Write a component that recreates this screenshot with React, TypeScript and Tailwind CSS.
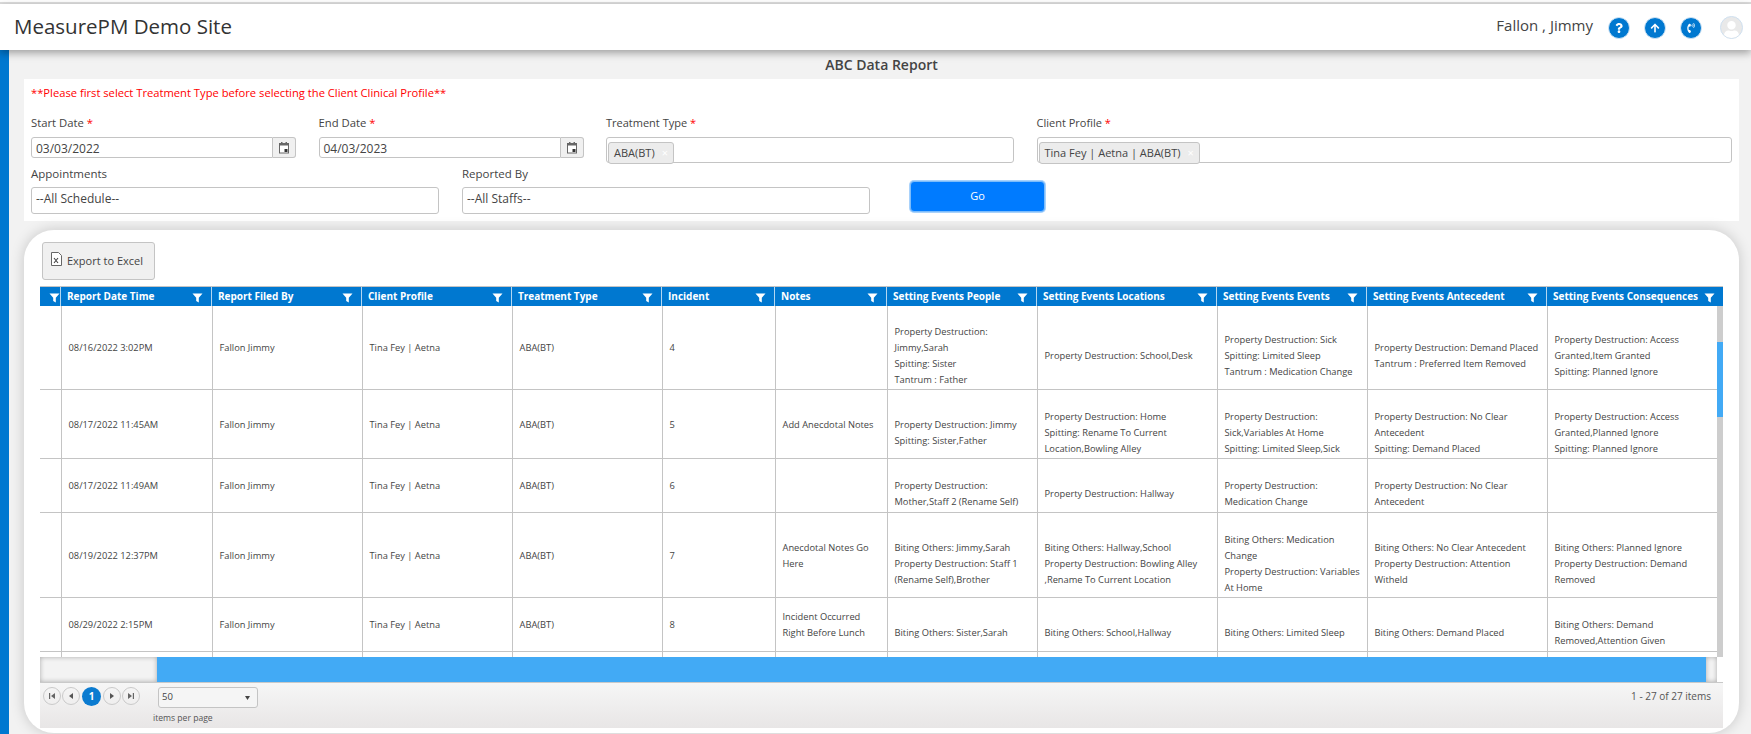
import { FaQuestion, FaArrowUp, FaPhoneVolume, FaUser } from 'react-icons/fa';

const columns = [
  { label: '', width: 21 },
  { label: 'Report Date Time', width: 151 },
  { label: 'Report Filed By', width: 150 },
  { label: 'Client Profile', width: 150 },
  { label: 'Treatment Type', width: 150 },
  { label: 'Incident', width: 113 },
  { label: 'Notes', width: 112 },
  { label: 'Setting Events People', width: 150 },
  { label: 'Setting Events Locations', width: 180 },
  { label: 'Setting Events Events', width: 150 },
  { label: 'Setting Events Antecedent', width: 180 },
  { label: 'Setting Events Consequences', width: 170 },
];

const rows = [
  {
    height: 83,
    cells: [
      ['08/16/2022 3:02PM'], ['Fallon Jimmy'], ['Tina Fey | Aetna'], ['ABA(BT)'], ['4'], [],
      ['Property Destruction:', 'Jimmy,Sarah', 'Spitting: Sister', 'Tantrum : Father'],
      ['Property Destruction: School,Desk'],
      ['Property Destruction: Sick', 'Spitting: Limited Sleep', 'Tantrum : Medication Change'],
      ['Property Destruction: Demand Placed', 'Tantrum : Preferred Item Removed'],
      ['Property Destruction: Access', 'Granted,Item Granted', 'Spitting: Planned Ignore'],
    ],
  },
  {
    height: 69,
    cells: [
      ['08/17/2022 11:45AM'], ['Fallon Jimmy'], ['Tina Fey | Aetna'], ['ABA(BT)'], ['5'], ['Add Anecdotal Notes'],
      ['Property Destruction: Jimmy', 'Spitting: Sister,Father'],
      ['Property Destruction: Home', 'Spitting: Rename To Current', 'Location,Bowling Alley'],
      ['Property Destruction:', 'Sick,Variables At Home', 'Spitting: Limited Sleep,Sick'],
      ['Property Destruction: No Clear', 'Antecedent', 'Spitting: Demand Placed'],
      ['Property Destruction: Access', 'Granted,Planned Ignore', 'Spitting: Planned Ignore'],
    ],
  },
  {
    height: 54,
    cells: [
      ['08/17/2022 11:49AM'], ['Fallon Jimmy'], ['Tina Fey | Aetna'], ['ABA(BT)'], ['6'], [],
      ['Property Destruction:', 'Mother,Staff 2 (Rename Self)'],
      ['Property Destruction: Hallway'],
      ['Property Destruction:', 'Medication Change'],
      ['Property Destruction: No Clear', 'Antecedent'],
      [],
    ],
  },
  {
    height: 85,
    cells: [
      ['08/19/2022 12:37PM'], ['Fallon Jimmy'], ['Tina Fey | Aetna'], ['ABA(BT)'], ['7'], ['Anecdotal Notes Go', 'Here'],
      ['Biting Others: Jimmy,Sarah', 'Property Destruction: Staff 1', '(Rename Self),Brother'],
      ['Biting Others: Hallway,School', 'Property Destruction: Bowling Alley', ',Rename To Current Location'],
      ['Biting Others: Medication', 'Change', 'Property Destruction: Variables', 'At Home'],
      ['Biting Others: No Clear Antecedent', 'Property Destruction: Attention', 'Witheld'],
      ['Biting Others: Planned Ignore', 'Property Destruction: Demand', 'Removed'],
    ],
  },
  {
    height: 54,
    cells: [
      ['08/29/2022 2:15PM'], ['Fallon Jimmy'], ['Tina Fey | Aetna'], ['ABA(BT)'], ['8'], ['Incident Occurred', 'Right Before Lunch'],
      ['Biting Others: Sister,Sarah'],
      ['Biting Others: School,Hallway'],
      ['Biting Others: Limited Sleep'],
      ['Biting Others: Demand Placed'],
      ['Biting Others: Demand', 'Removed,Attention Given'],
    ],
  },
  // only the top of this row shows above the scrollbar
  { height: 40, cells: [[], [], [], [], [], [], [], [], [], [], []] },
];

const FilterIcon = () => (
  <svg width="11" height="11" viewBox="0 0 11 11" className="shrink-0 mt-[2px]">
    <path d="M0.5 1.5h10L6.8 5.8V10.5L4.2 9V5.8z" fill="#fff" />
  </svg>
);

const CalendarIcon = () => (
  <svg width="12" height="13" viewBox="0 0 12 13">
    <rect x="1.5" y="2.5" width="9" height="9.5" fill="#fff" stroke="#666" strokeWidth="1" />
    <rect x="1.5" y="2.5" width="9" height="2" fill="#666" />
    <rect x="3" y="1" width="1.5" height="2" fill="#666" />
    <rect x="7.5" y="1" width="1.5" height="2" fill="#666" />
    <rect x="6.5" y="8" width="3" height="3" fill="#333" />
  </svg>
);

const ExcelIcon = () => (
  <svg width="11" height="14" viewBox="0 0 11 14">
    <path d="M0.5 0.5h7l3 3v10h-10z" fill="#fff" stroke="#666" />
    <path d="M3 6l4 5M7 6l-4 5" stroke="#444" strokeWidth="1.1" />
  </svg>
);

const Required = () => <span className="text-[#f00]"> *</span>;

const DateField = ({ label, value }: { label: string; value: string }) => (
  <div className="w-[265px] shrink-0">
    <div className="h-[27px] pt-[5px] text-[11.3px] leading-[16px] text-[#444]">
      {label}
      <Required />
    </div>
    <div className="flex h-[21px]">
      <div className="flex-1 border border-[#c4c4c4] rounded-l-[3px] px-[4px] text-[12px] leading-[21px] text-[#444]">
        {value}
      </div>
      <div className="w-[23px] flex items-center justify-center border border-l-0 border-[#c4c4c4] rounded-r-[3px] bg-[#f0f0f0]">
        <CalendarIcon />
      </div>
    </div>
  </div>
);

const TagField = ({ label, tag, className }: { label: string; tag: string; className: string }) => (
  <div className={className}>
    <div className="h-[27px] pt-[5px] text-[11px] leading-[16px] text-[#444]">
      {label}
      <Required />
    </div>
    <div className="h-[26px] border border-[#c4c4c4] rounded-[3px] p-[1px]">
      <span className="inline-flex items-center h-[22px] px-[5px] gap-[7px] bg-[#ececec] border border-[#c4c4c4] rounded-[3px] text-[11px] text-[#444]">
        {tag}
        <span className="text-white text-[11px]">×</span>
      </span>
    </div>
  </div>
);

const SelectField = ({ label, value }: { label: string; value: string }) => (
  <div className="w-[408px] shrink-0">
    <div className="h-[22px] pt-[1px] text-[11.5px] leading-[16px] text-[#444]">{label}</div>
    <div className="h-[27px] border border-[#c4c4c4] rounded-[3px] px-[4px] pt-[3px] text-[12px] leading-[16px] text-[#444]">
      {value}
    </div>
  </div>
);

const PagerButton = ({ kind }: { kind: 'first' | 'prev' | 'next' | 'last' }) => (
  <div className="w-[18px] h-[18px] rounded-full border border-[#c9c9c9] flex items-center justify-center">
    <svg width="8" height="8" viewBox="0 0 8 8">
      {kind === 'first' && <path d="M1 1h1.2v6H1zM7 1v6L3 4z" fill="#666" />}
      {kind === 'prev' && <path d="M6 1v6L2 4z" fill="#555" />}
      {kind === 'next' && <path d="M2 1v6l4-3z" fill="#555" />}
      {kind === 'last' && <path d="M7 1H5.8v6H7zM1 1v6l4-3z" fill="#666" />}
    </svg>
  </div>
);

const HeaderIcon = ({ children }: { children: React.ReactNode }) => (
  <div className="w-[22px] h-[22px] rounded-full bg-[#0078d0] border border-[#cfe4f5] flex items-center justify-center text-white text-[10px]">
    {children}
  </div>
);

export default function App() {
  return (
    <div className="h-[734px] overflow-hidden bg-[#f2f2f2] flex flex-col font-['Open_Sans',sans-serif]">
      {/* Top bar */}
      <div className="h-[2px] bg-white" />
      <div className="h-[2px] bg-[#dedede]" />
      <header className="relative z-10 h-[46px] shrink-0 bg-white flex items-center justify-between pl-[14px] pr-[8px] shadow-[0_3px_8px_rgba(0,0,0,0.35)]">
        <h1 className="text-[20.5px] leading-[26px] text-[#333] mt-[-3px]">MeasurePM Demo Site</h1>
        <div className="flex items-center">
          <span className="text-[15px] text-[#444] mr-[15px] mt-[-3px]">Fallon , Jimmy</span>
          <div className="flex items-center gap-[14px] mr-[18px] mt-[1px]">
            <HeaderIcon><FaQuestion /></HeaderIcon>
            <HeaderIcon><FaArrowUp /></HeaderIcon>
            <HeaderIcon><FaPhoneVolume /></HeaderIcon>
          </div>
          <div className="w-[23px] h-[23px] mt-[1px] rounded-full bg-[#e9e9e9] border border-[#cfe0f0] overflow-hidden flex items-end justify-center text-white text-[17px]">
            <FaUser />
          </div>
        </div>
      </header>

      <div className="flex flex-1 min-h-0">
        <div className="w-[9px] bg-[#0078d0] shrink-0" />
        <main className="flex-1 pl-[15px] pr-[12px] min-w-0">
          <div className="h-[29px] text-center text-[14px] font-semibold leading-[30px] text-[#444]">ABC Data Report</div>

          {/* Filters */}
          <section className="h-[142px] bg-white pl-[7px] pr-[7px]">
            <div className="h-[31px] pt-[6px] text-[11.2px] leading-[16px] text-[#f00]">
              **Please first select Treatment Type before selecting the Client Clinical Profile**
            </div>
            <div className="flex gap-[22.5px]">
              <DateField label="Start Date" value="03/03/2022" />
              <DateField label="End Date" value="04/03/2023" />
              <TagField label="Treatment Type" tag="ABA(BT)" className="w-[408px] shrink-0" />
              <TagField label="Client Profile" tag="Tina Fey | Aetna | ABA(BT)" className="flex-1 min-w-0" />
            </div>
            <div className="flex items-start gap-[23px] mt-[2px]">
              <SelectField label="Appointments" value="--All Schedule--" />
              <SelectField label="Reported By" value="--All Staffs--" />
              <button className="w-[135px] h-[31px] mt-[16px] ml-[17px] bg-[#007bff] border border-[#7cbcfb] rounded-[4px] text-white text-[11px] shadow-[0_0_0_1px_#a9d2fb]">
                Go
              </button>
            </div>
          </section>

          {/* Grid card */}
          <section className="h-[503px] mt-[9px] mb-[1px] bg-white rounded-[30px] pl-[16px] pr-[15px] pt-[12px] shadow-[0_0_14px_rgba(0,0,0,0.18)] overflow-hidden">
            <button className="flex items-center gap-[5px] w-[113px] h-[38px] ml-[2px] pl-[8px] bg-[#f0f0f0] border border-[#c4c4c4] rounded-[3px] text-[11px] text-[#444]">
              <span className="mt-[-5px]"><ExcelIcon /></span>
              Export to Excel
            </button>

            <div className="mt-[6px] w-[1683px]">
              {/* Column headers */}
              <div className="flex h-[20px] bg-[#0078d0] border-t border-[#c4c4c4]">
                {columns.map((c, i) => (
                  <div
                    key={i}
                    style={{ width: i === columns.length - 1 ? c.width + 6 : c.width }}
                    className={`flex items-center justify-between shrink-0 border-r last:border-r-0 border-white/70 ${i === 0 ? 'pl-[5px]' : 'pl-[6px] pr-[8px]'}`}
                  >
                    <span className="text-[10px] font-bold text-white whitespace-nowrap">{c.label}</span>
                    <FilterIcon />
                  </div>
                ))}
              </div>

              {/* Rows with vertical scrollbar */}
              <div className="flex h-[351px]">
                <div className="w-[1677px] overflow-hidden">
                  <table className="table-fixed border-collapse w-[1677px]">
                    <colgroup>
                      {columns.map((c, i) => (
                        <col key={i} style={{ width: c.width }} />
                      ))}
                    </colgroup>
                    <tbody>
                      {rows.map((row, r) => (
                        <tr key={r} style={{ height: row.height }} className="border-b border-[#c4c4c4]">
                          <td className="border-r border-[#c4c4c4]" />
                          {row.cells.map((lines, c) => (
                            <td
                              key={c}
                              className={`border-r last:border-r-0 border-[#c4c4c4] pl-[7px] text-[9.3px] leading-[16px] text-[#444] whitespace-nowrap overflow-hidden ${c >= 6 ? 'pt-[18px]' : 'pt-[2px]'}`}
                            >
                              {lines.map((line, l) => (
                                <div key={l}>{line}</div>
                              ))}
                            </td>
                          ))}
                        </tr>
                      ))}
                    </tbody>
                  </table>
                </div>
                <div className="w-[6px] flex flex-col bg-[#cdcdcd]">
                  <div className="h-[36px]" />
                  <div className="h-[75px] bg-[#42aaf5]" />
                </div>
              </div>

              {/* Horizontal scrollbar */}
              <div className="flex h-[25px] w-[1677px]">
                <div className="w-[117px] bg-[#f3f3f3] shadow-[inset_0_0_5px_rgba(0,0,0,0.3)]" />
                <div className="flex-1 bg-[#42aaf5]" />
                <div className="w-[11px] bg-[#f3f3f3] shadow-[inset_0_0_5px_rgba(0,0,0,0.3)]" />
              </div>

              {/* Pager */}
              <div className="flex h-[46px] border-t border-[#c9c9c9] bg-gradient-to-b from-[#f6f6f6] to-[#e8e6e6] pl-[3px] pt-[4px] pr-[12px]">
                <div className="flex items-start gap-[1px] h-[20px]">
                  <PagerButton kind="first" />
                  <PagerButton kind="prev" />
                  <div className="w-[19px] h-[19px] mx-[1px] rounded-full bg-[#0b7bd0] text-white text-[10px] font-bold flex items-center justify-center">1</div>
                  <PagerButton kind="next" />
                  <PagerButton kind="last" />
                </div>
                <div className="ml-[13px] flex flex-col">
                  <div className="flex items-center justify-between w-[100px] h-[21px] ml-[5px] px-[3px] pr-[7px] border border-[#c4c4c4] rounded-[3px] bg-[#f5f5f5] text-[9.5px] text-[#444]">
                    50
                    <svg width="5" height="4" viewBox="0 0 5 4"><path d="M0 0h5L2.5 4z" fill="#444" /></svg>
                  </div>
                  <span className="mt-[3px] text-[8.6px] leading-[14px] text-[#555]">items per page</span>
                </div>
                <span className="ml-auto mt-[2px] text-[10px] leading-[14px] text-[#555]">1 - 27 of 27 items</span>
              </div>
            </div>
          </section>
        </main>
      </div>
    </div>
  );
}
